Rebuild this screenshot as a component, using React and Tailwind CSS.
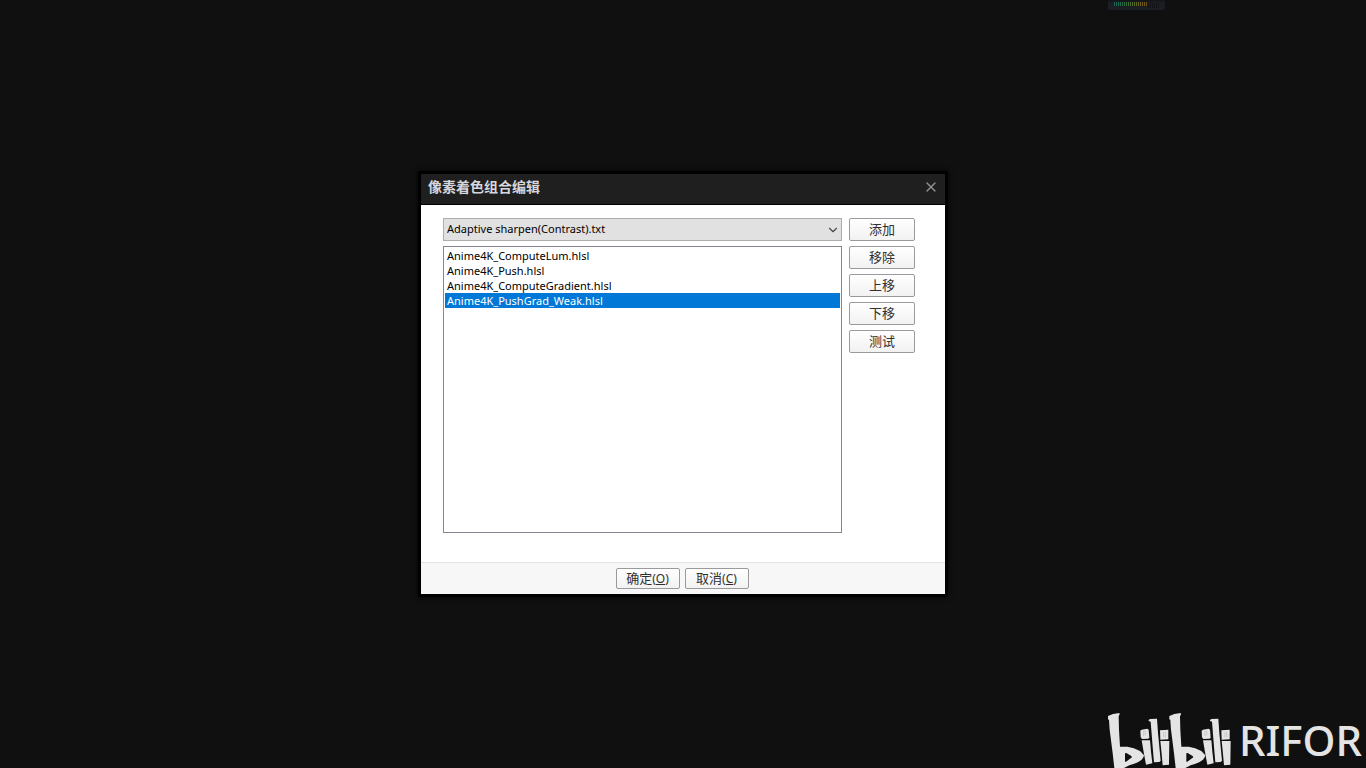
import { useState } from 'react';
import { X, ChevronDown } from 'lucide-react';

const presets = ['Adaptive sharpen(Contrast).txt'];
const shaders = ['Anime4K_ComputeLum.hlsl', 'Anime4K_Push.hlsl', 'Anime4K_ComputeGradient.hlsl', 'Anime4K_PushGrad_Weak.hlsl'];
const actions = ['添加', '移除', '上移', '下移', '测试'];
const ticks = ['#176557', '#1a6655', '#1e6751', '#24684b', '#2a6945', '#306a40', '#386a3a', '#406a35', '#486930', '#50682b', '#586727', '#606523', '#666220', '#6b5e1e', '#6e591c', '#70541b', '#704e1a'];

const buttonClass = 'rounded-xs border border-[#9a9a9d] bg-linear-to-b from-white to-[#f2f2f2] pb-0.5 text-[#303030] active:to-[#e0e0e0]';

function LevelMeter() {
  return (
    <svg className="absolute top-0 right-[201px]" width="57" height="10" viewBox="0 0 57 10" aria-hidden="true">
      <path d="M0 0H57V8Q57 10 55 10H2Q0 10 0 8Z" fill="#1b1e23" />
      <path d="M0 0H57V2H0Z" fill="#14161a" />
      {ticks.map((color, i) => <rect key={color} x={6 + i * 2} y="2" width="1" height="4" fill={color} />)}
      {[40, 42, 44, 46, 48, 50].map(x => <rect key={x} x={x} y="3" width="1" height="5" fill="#111316" />)}
    </svg>
  );
}

function LogoHalf() {
  return (
    <>
      <path fillRule="evenodd" d="M0 9L15 3L34 0L35 4L32 10L33 50L36 101L58 101Q78 103 96 114L108 127Q108 133 101 140Q88 151 64 157L48 165H19L14 121L5 50L3 21L0 19ZM51 121V146L54 146L72 133L70 129L55 120Z" />
      <path d="M97 53L101 50L118 47L122 50L124 75L120 77L102 78L98 73Z" />
      <path d="M101 82L126 82L129 116L133 151L114 155L108 123Z" />
      <path d="M122 21L126 18L147 17L150 60L158 143L154 147L138 148L134 101L128 26L122 24Z" />
      <path d="M156 52L181 50L181 79L157 80Z" />
      <path d="M157 84L184 84L183 155L164 157L161 123Z" />
      <path d="M107 54V69M112 53V67M167 57V73M172 57V73" stroke="#bcbcbc" strokeWidth="2" fill="none" />
    </>
  );
}

function Watermark() {
  return (
    <div className="absolute right-1 bottom-0 flex items-end gap-2 text-[#e4e4e4]">
      <svg width="123" height="55" viewBox="0 0 369 165" fill="currentColor" role="img" aria-label="bilibili">
        <LogoHalf />
        <g transform="translate(184 0)"><LogoHalf /></g>
      </svg>
      <span className="text-[42px] leading-[57px] font-medium font-['Noto_Sans',sans-serif]">RIFOR</span>
    </div>
  );
}

export default function App() {
  const [preset, setPreset] = useState(presets[0]);
  const [selected, setSelected] = useState(shaders[3]);

  return (
    <main className="relative flex min-h-screen items-center justify-center overflow-hidden bg-[#101010] font-['Noto_Sans','Noto_Sans_CJK_SC',sans-serif]">
      <LevelMeter />
      <section role="dialog" aria-labelledby="dialog-title" className="w-full max-w-[530px] border-3 border-black bg-white shadow-[0_0_5px_#000]">
        <header className="flex h-[31px] items-center justify-between border-b border-black bg-[#1f1f1f] pr-1.5 pb-1 pl-[7px]">
          <h1 id="dialog-title" className="text-sm leading-5 font-bold text-[#d6d6de]">像素着色组合编辑</h1>
          <button aria-label="关闭" className="text-[#929292] hover:text-white">
            <X size={16} strokeWidth={2} />
          </button>
        </header>

        <div className="flex gap-[7px] pt-[13px] pr-[30px] pb-[29px] pl-[22px]">
          <div className="flex min-w-0 flex-1 flex-col gap-[5px]">
            <div className="relative">
              <select aria-label="着色器" value={preset} onChange={e => setPreset(e.target.value)} className="block h-[23px] w-full appearance-none border border-[#adadad] bg-[#e1e1e1] pr-5 pl-[3px] text-[11px] text-black">
                {presets.map(name => <option key={name}>{name}</option>)}
              </select>
              <ChevronDown size={14} strokeWidth={2} className="pointer-events-none absolute top-[5px] right-[2px] text-[#484848]" />
            </div>
            <select size={19} aria-label="着色器列表" value={selected} onChange={e => setSelected(e.target.value)} className="block h-[287px] w-full appearance-none overflow-hidden border border-[#828790] bg-white p-px text-[11px] text-black">
              {shaders.map(name => (
                <option key={name} value={name} className="h-[15px] min-h-0 p-0 px-0.5 text-[11px] leading-[15px] checked:bg-[linear-gradient(#0078d7,#0078d7)] checked:text-white">{name}</option>
              ))}
            </select>
          </div>
          <div className="flex w-[66px] flex-col gap-[5px]">
            {actions.map(label => (
              <button key={label} className={`h-[23px] text-[13px] leading-5 ${buttonClass}`}>{label}</button>
            ))}
          </div>
        </div>

        <footer className="flex h-8 justify-center gap-[5px] border-t border-[#e3e3e3] bg-[#f7f7f7] pt-[5px] pr-0.5">
          <button className={`h-[21px] w-16 text-[13px] leading-[18px] ${buttonClass}`}>确定<span className="text-xs">(<u>O</u>)</span></button>
          <button className={`h-[21px] w-16 text-[13px] leading-[18px] ${buttonClass}`}>取消<span className="text-xs">(<u>C</u>)</span></button>
        </footer>
      </section>
      <Watermark />
    </main>
  );
}
